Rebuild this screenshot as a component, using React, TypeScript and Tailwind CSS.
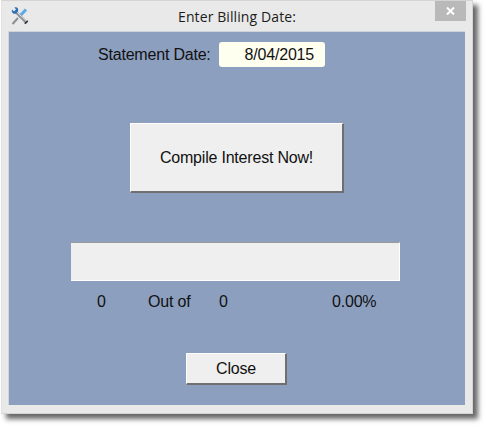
export default function App() {
  return (
    <div className="w-[485px] h-[425px] bg-white pl-px [font-family:'Liberation_Sans',Arial,sans-serif] text-[16px] tracking-[-0.2px] text-[#111]">
      <div className="w-[472px] h-[414px] bg-[#e9e9e9] border border-[#d4d4d4] border-l-[#e2e2e2] shadow-[5px_5px_5px_rgba(0,0,0,0.6)] flex flex-col">
        <div className="h-[30px] shrink-0 flex items-start relative">
          <svg className="absolute left-[8px] top-[5px]" width="20" height="20" viewBox="0 0 20 20">
            <path d="M9 11 L16 3.5" stroke="#5aa9e6" strokeWidth="3" fill="none" />
            <path d="M2.5 18 L8 12" stroke="#8a8f94" strokeWidth="2" fill="none" />
            <path d="M5 5 L17 17" stroke="#8e9398" strokeWidth="3" fill="none" />
            <path d="M6 5 L17.5 16" stroke="#e8e8e8" strokeWidth="1" fill="none" />
            <path d="M14.8 17.8 L17.8 14.8" stroke="#2f3438" strokeWidth="1.5" fill="none" />
            <path d="M2 3.5 L4 5.5 L6 3.5 L4.5 1.5 C7 0.5 9 2.5 8 5.5 L6 7.5 C3.5 8.5 1 6.5 2 3.5 Z" fill="#2f6fb5" />
          </svg>
          <div className="flex-1 pl-[37px] pt-[8px] text-center text-[14px] leading-[15px] tracking-[0.1px] [font-family:'Open_Sans',sans-serif] text-[#1c1c1c]">
            Enter Billing Date:
          </div>
          <div className="w-[31px] h-[20px] mr-[6px] bg-[#b9b9b9] flex items-center justify-center">
            <svg width="9" height="8" viewBox="0 0 9 8">
              <path d="M1 0.5 L8 7.5 M8 0.5 L1 7.5" stroke="#fff" strokeWidth="2" fill="none" />
            </svg>
          </div>
        </div>
        <div className="w-[457px] h-[374px] ml-[6px] bg-[#8c9fbf] border-t border-l border-[#cfd3da] flex flex-col">
          <div className="flex items-center pl-[89px] pt-[10px]">
            <span className="leading-[25px] w-[121px]">Statement Date:</span>
            <div className="w-[106px] h-[25px] rounded-[3px] bg-[#fffff0] text-right pr-[11px] leading-[25px]">8/04/2015</div>
          </div>
          <button className="self-start ml-[121px] mt-[56px] w-[214px] h-[70px] bg-[#efefef] border-t border-l border-white border-r-2 border-b-2 border-r-[#6f6f6f] border-b-[#6f6f6f] text-center">
            Compile Interest Now!
          </button>
          <div className="ml-[62px] mt-[49px] w-[329px] h-[39px] bg-[#efefef] border-t border-[#9a9a9a] border-r border-b border-r-white border-b-white" />
          <div className="flex pt-[11px] leading-[20px]">
            <span className="ml-[88px] w-[51px]">0</span>
            <span className="w-[71px]">Out of</span>
            <span className="w-[113px]">0</span>
            <span>0.00%</span>
          </div>
          <button className="self-start ml-[177px] mt-[41px] w-[101px] h-[32px] bg-[#efefef] border-t border-l border-white border-r-2 border-b-2 border-r-[#6f6f6f] border-b-[#6f6f6f] text-center">
            Close
          </button>
        </div>
      </div>
    </div>
  );
}
